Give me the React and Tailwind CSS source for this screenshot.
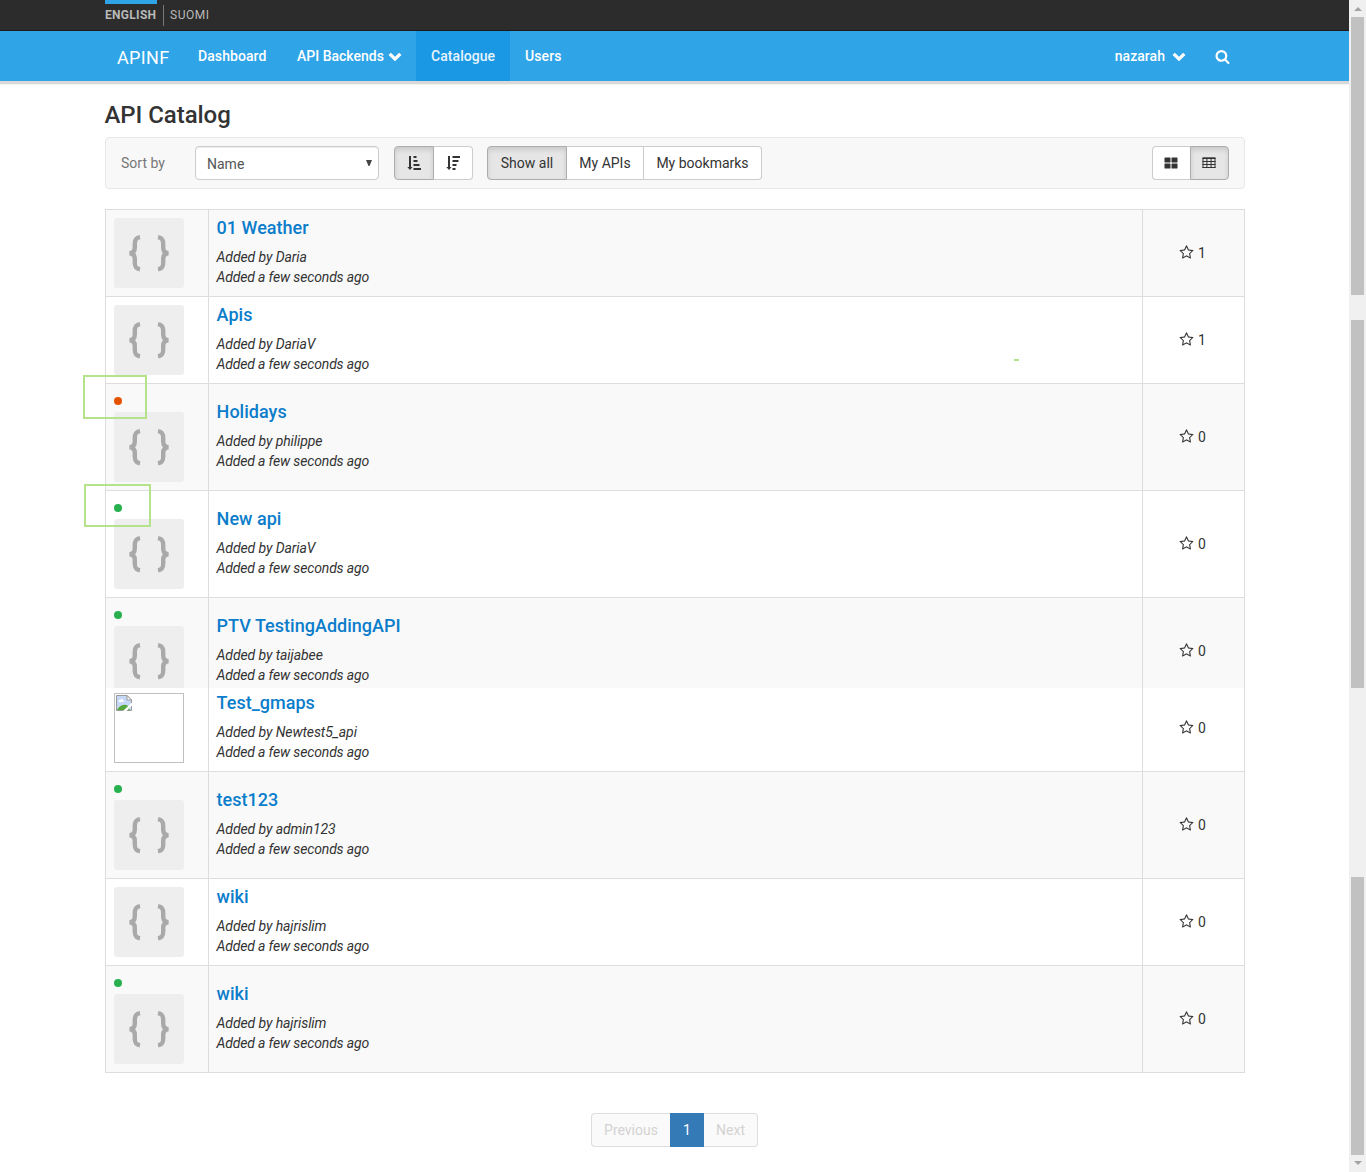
const rows = [
  { name: '01 Weather', by: 'Daria', stars: 1, h: 'h-[87px]', shade: true },
  { name: 'Apis', by: 'DariaV', stars: 1, h: 'h-[87px]' },
  { name: 'Holidays', by: 'philippe', stars: 0, h: 'h-[107px]', shade: true, dot: 'bg-[#e55300]' },
  { name: 'New api', by: 'DariaV', stars: 0, h: 'h-[107px]', dot: 'bg-[#28b04f]' },
  { name: 'PTV TestingAddingAPI', by: 'taijabee', stars: 0, h: 'h-[107px]', clip: 'h-[91px]', shade: true, dot: 'bg-[#28b04f]' },
  { name: 'Test_gmaps', by: 'Newtest5_api', stars: 0, h: 'h-[87px] -mt-1', clip: 'h-[83px]', broken: true },
  { name: 'test123', by: 'admin123', stars: 0, h: 'h-[107px]', shade: true, dot: 'bg-[#28b04f]' },
  { name: 'wiki', by: 'hajrislim', stars: 0, h: 'h-[87px]' },
  { name: 'wiki', by: 'hajrislim', stars: 0, h: 'h-[107px]', shade: true, dot: 'bg-[#28b04f]' },
];

function Chevron({ className }) {
  return (
    <svg viewBox="0 0 14 10" className={`h-[10px] w-[14px] ${className}`}>
      <path d="M0.5 3 L2.9 0.7 L7 4.7 L11.1 0.7 L13.5 3 L7 9.3Z" fill="#fff" />
    </svg>
  );
}

function Search() {
  return (
    <svg viewBox="0 0 1792 1792" className="h-[15px] w-[15px]" fill="#fff">
      <path d="M1216 832q0-185-131.500-316.500t-316.500-131.500-316.500 131.500-131.500 316.500 131.500 316.500 316.500 131.500 316.500-131.500 131.500-316.500zm512 832q0 52-38 90t-90 38q-54 0-90-38l-343-342q-179 124-399 124-143 0-273.500-55.500t-225-150-150-225-55.500-273.500 55.500-273.500 150-225 225-150 273.500-55.500 273.500 55.500 225 150 150 225 55.500 273.500q0 220-124 399l343 343q37 37 37 90z" />
    </svg>
  );
}

function Star() {
  return (
    <svg viewBox="0 0 1792 1792" className="-mt-px h-[15px] w-[15px]" fill="#333">
      <path d="M1201 1004l306-297-422-62-189-382-189 382-422 62 306 297-73 421 378-199 377 199zm527-357q0 22-26 48l-363 354 86 500q1 7 1 20 0 50-41 50-19 0-40-12l-449-236-449 236q-22 12-40 12-21 0-31.500-14.500t-10.500-35.500q0-6 2-20l86-500-364-354q-25-27-25-48 0-37 56-46l502-73 225-455q19-41 49-41t49 41l225 455 502 73q56 9 56 46z" />
    </svg>
  );
}

function SortIcon({ desc }) {
  const widths = desc ? [8, 6, 4, 3] : [3, 4, 6, 7.5];
  return (
    <svg viewBox="0 0 14 14" className="h-[14px] w-[14px]" fill="#333">
      <path d="M2 0H4V11H5.500L3 14L0.300 11H2Z" />
      {widths.map((w, i) => (
        <rect key={i} x="6.500" y={i * 4} width={w} height="2" />
      ))}
    </svg>
  );
}

function Braces() {
  return (
    <svg viewBox="0 0 70 70" className="h-[70px] w-[70px]" fill="none" stroke="#a9a9a9" strokeWidth="4.4">
      <path d="M26 19.2C21.500 20 20.800 22 20.800 26V29.500C20.800 33 19.500 35.100 15.500 35.300C19.500 35.500 20.800 37.500 20.800 41V44.500C20.800 48.500 21.500 50.500 26 51.300" />
      <path d="M44 19.200C48.500 20 49.200 22 49.200 26V29.500C49.200 33 50.500 35.100 54.500 35.300C50.500 35.500 49.200 37.500 49.200 41V44.500C49.200 48.500 48.500 50.500 44 51.300" />
    </svg>
  );
}

function BrokenImage() {
  return (
    <div className="h-[70px] w-[70px] border border-[#c0c0c0] p-px">
      <svg viewBox="0 0 16 16" className="h-4 w-4">
        <path d="M0.500 0.500H11L15.500 5V15.500H0.500Z" fill="#c5d9f7" stroke="#999" />
        <path d="M2.500 6.500Q2.500 4.500 4.500 4.500Q6.500 3 7.500 5.500Q8.500 6.500 7 7H3Z" fill="#fff" />
        <path d="M1 15Q3 11 7 10Q10 9 12 11L14 15Z" fill="#54a83a" />
        <path d="M11 0.500V5H15.500Z" fill="#fff" stroke="#999" />
        <path d="M16 7.500L7 16H10.500L16 10.500Z" fill="#fff" />
      </svg>
    </div>
  );
}

function Row({ row }) {
  return (
    <div className={`overflow-hidden ${row.clip || ''}`}>
      <div className={`flex border-t border-l border-[#ddd] ${row.h} ${row.shade ? 'bg-[#f9f9f9]' : 'bg-white'}`}>
        <div className="w-[102px] shrink-0 pt-2 pl-2">
          {row.dot && (
            <div className="flex h-5 items-center">
              <span className={`-mt-[3px] h-2 w-2 rounded-full ${row.dot}`} />
            </div>
          )}
          {row.broken ? (
            <BrokenImage />
          ) : (
            <div className="h-[70px] w-[70px] rounded-[3px] bg-[#eee]">
              <Braces />
            </div>
          )}
        </div>
        <div className="flex w-[934px] shrink-0 flex-col justify-center border-l border-[#ddd] pl-[7.6px] text-[14px] leading-5 text-[#333]">
          <h4 className="mb-[9px] -mt-px text-[18px] font-medium leading-5 tracking-[0.02px] text-[#0b7dcb]">{row.name}</h4>
          <p className="tracking-[-0.09px] italic">Added by {row.by}</p>
          <p className="tracking-[-0.16px] italic">Added a few seconds ago</p>
        </div>
        <div className="flex w-[103px] shrink-0 items-center justify-center gap-[4px] border-x border-[#ddd] pr-[2px] text-[14px] text-[#333]">
          <Star />
          <span>{row.stars}</span>
        </div>
      </div>
    </div>
  );
}

const btn = 'flex h-[34px] items-center justify-center border border-[#ccc] bg-white text-[14px] text-[#333]';
const btnOn = 'flex h-[34px] items-center justify-center border border-[#adadad] bg-[#e6e6e6] text-[14px] text-[#333] shadow-[inset_0_3px_5px_rgba(0,0,0,0.125)]';

export default function App() {
  return (
    <div className="relative flex h-[1172px] w-[1366px] overflow-hidden bg-white font-[Roboto,sans-serif]">
      <div className="w-[1349px] shrink-0">
        <div className="flex h-[31px] border-b border-[#1b1b1b] bg-[#2c2c2c] pl-[105px] text-[12px] leading-[22px] text-[#b9b9b9]">
          <div className="w-[52px] border-t-4 border-[#2fa4e7] font-bold tracking-[0.3px] whitespace-nowrap">ENGLISH</div>
          <div className="mt-[5px] ml-[6px] h-[21px] border-l border-[#777] pl-[6px] leading-[20px] tracking-[0.5px]">SUOMI</div>
        </div>
        <nav className="flex h-[50px] bg-[#2fa4e7] text-[14px] leading-[50px] font-medium text-white">
          <div className="ml-[117px] w-[66px] text-[18px] leading-[53px] font-normal tracking-[0.35px]">APINF</div>
          <div className="w-[99px] pl-[15px] tracking-[0.08px]">Dashboard</div>
          <div className="flex w-[134px] items-center pl-[15px]">
            API Backends
            <Chevron className="mt-[2px] ml-[4px]" />
          </div>
          <div className="w-[94px] bg-[#1b98e4] pl-[15px] tracking-[0.06px] text-[#e6f4fc]">Catalogue</div>
          <div className="pl-[15px] tracking-[0.1px]">Users</div>
          <div className="mr-[119px] ml-auto flex items-center">
            <span className="tracking-[0.04px]">nazarah</span>
            <Chevron className="mt-[2px] ml-[7px]" />
            <span className="ml-[29px]"><Search /></span>
          </div>
        </nav>
        <div className="h-[3px] bg-[#d9d9d9]" />
        <div className="h-px bg-[#f2f2f2]" />
        <main className="ml-[105px] w-[1140px]">
          <h1 className="-ml-[0.5px] h-[52px] pt-[17px] text-[24px] leading-[26px] font-medium tracking-[-0.06px] text-[#333]">API Catalog</h1>
          <div className="flex h-[52px] items-center rounded border border-[#e7e7e7] bg-[#f8f8f8]">
            <span className="w-[89px] pl-[15px] text-[14px] text-[#777]">Sort by</span>
            <div className="flex h-[34px] w-[184px] items-center justify-between rounded border border-[#ccc] bg-white pr-[6px] pl-[11px] text-[14px] text-[#555] shadow-[inset_0_1px_1px_rgba(0,0,0,0.075)]">
              <span className="pt-[2px]">Name</span>
              <svg viewBox="0 0 6 6" className="h-[6px] w-[6px]"><path d="M0 0H6L3.500 6H2.500Z" fill="#444" /></svg>
            </div>
            <div className="ml-[15px] flex">
              <div className={`${btnOn} w-10 rounded-l`}><SortIcon /></div>
              <div className={`${btn} w-[39px] rounded-r border-l-0`}><SortIcon desc /></div>
            </div>
            <div className="ml-[14px] flex">
              <div className={`${btnOn} w-20 rounded-l`}>Show all</div>
              <div className={`${btn} w-[77px] border-l-0`}>My APIs</div>
              <div className={`${btn} w-[118px] rounded-r border-l-0`}>My bookmarks</div>
            </div>
            <div className="mr-[15px] ml-auto flex">
              <div className={`${btn} w-[38px] rounded-l border-r-0 pr-px`}>
                <svg viewBox="0 0 14 12" className="h-3 w-[14px]" fill="#333">
                  <rect x="0.500" y="0.500" width="6" height="5" rx="0.600" /><rect x="7.500" y="0.500" width="6" height="5" rx="0.600" />
                  <rect x="0.500" y="6.500" width="6" height="5" rx="0.600" /><rect x="7.500" y="6.500" width="6" height="5" rx="0.600" />
                </svg>
              </div>
              <div className={`${btnOn} w-[39px] rounded-r pr-[2px]`}>
                <svg viewBox="0 0 14 12" className="h-3 w-[14px]" fill="none" stroke="#333">
                  <path d="M0.500 1.500H13.500M0.500 4.500H13.500M0.500 7.500H13.500M0.500 10.500H13.500M1 1V11M4.900 1V11M9.100 1V11M13 1V11M0.500 0.800H13.500" />
                </svg>
              </div>
            </div>
          </div>
          <div className="mt-5 border-b border-[#ddd]">
            {rows.map((row, i) => <Row key={i} row={row} />)}
          </div>
          <div className="mt-10 flex justify-center pr-px text-[14px] leading-8 text-[#d3d3d3]">
            <div className="w-[79px] rounded-l border border-r-0 border-[#ddd] bg-[#fafafa] text-center">Previous</div>
            <div className="w-[34px] border border-[#337ab7] bg-[#337ab7] text-center text-white">1</div>
            <div className="w-[54px] rounded-r border border-l-0 border-[#ddd] bg-[#fafafa] text-center">Next</div>
          </div>
        </main>
      </div>
      <div className="flex w-[17px] shrink-0 flex-col items-center bg-[#f0f0f0] pr-[2px] pl-[2px]">
        <svg viewBox="0 0 8 4" className="mt-[7px] h-1 w-2"><path d="M4 0L8 4H0Z" fill="#a3a3a3" /></svg>
        <div className="mt-[6px] h-[278px] w-[13px] bg-[#c1c1c1]" />
        <div className="mt-[25px] h-[368px] w-[13px] bg-[#c1c1c1]" />
        <div className="mt-[189px] h-[278px] w-[13px] bg-[#c1c1c1]" />
        <svg viewBox="0 0 8 4" className="mt-[6px] h-1 w-2"><path d="M0 0H8L4 4Z" fill="#a3a3a3" /></svg>
      </div>
      <div className="absolute top-[375px] left-[83px] h-11 w-16 border-2 border-[#b5e38b]" />
      <div className="absolute top-[484px] left-[84px] h-[43px] w-[67px] border-2 border-[#b5e38b]" />
      <div className="absolute top-[359px] left-[1014px] h-[2px] w-[5px] bg-[#b5e38b]" />
    </div>
  );
}
